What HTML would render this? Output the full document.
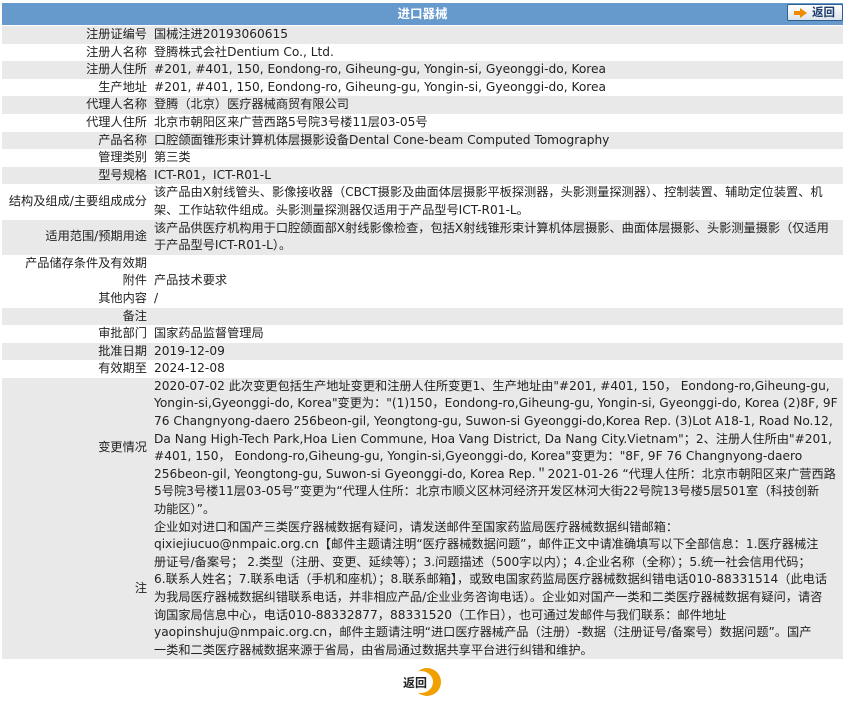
<!DOCTYPE html>
<html><head><meta charset="utf-8"><style>
body{margin:0;background:#fff;font-family:"DejaVu Sans","Noto Sans CJK SC",sans-serif;font-size:12.2px;color:#222;width:850px;height:701px;overflow:hidden;position:relative}
.hdr{position:absolute;left:2px;top:3px;width:841px;height:22px;background:#6699cc;color:#fff;font-weight:bold;text-align:center;line-height:22px;font-size:12.5px;font-family:"Liberation Sans","Noto Sans CJK SC",sans-serif}
.rb{position:absolute;width:54px;height:15px;border:1px solid #2e5e90;border-radius:2px;background:linear-gradient(#fff,#dde4ec);color:#1b3b6a;font-size:11.5px;line-height:15px;font-weight:bold}
.rb i{position:absolute;left:12px;top:3px;width:0;height:0;border-left:7px solid #f08a00;border-top:5px solid transparent;border-bottom:5px solid transparent}
.rb i:before{content:"";position:absolute;left:-13px;top:-2px;width:6px;height:4px;background:#f08a00}
.rb span{position:absolute;left:24px;top:0}
.tb{position:absolute;left:2px;top:26px;width:841px}
.r{display:flex;line-height:17.6px}
.g{background:#e9e9e9}
.l{width:145px;text-align:right;padding-right:7px;display:flex;align-items:center;justify-content:flex-end;white-space:nowrap}
.v{flex:1;white-space:nowrap;overflow:hidden}
.bb{position:absolute;left:403px;top:668px;width:44px;height:28px}
.bb .c{position:absolute;left:10px;top:0;width:28px;height:28px;border-radius:50%;background:#f0a000}
.bb .w{position:absolute;left:6px;top:3px;width:24px;height:22px;border-radius:50%;background:#fff}
.bb span{position:absolute;left:0;top:6px;font-weight:bold;font-size:12px;color:#222}
</style></head><body>
<div class="hdr">进口器械</div>
<div class="rb" style="left:787px;top:4px"><i></i><span>返回</span></div>
<div class="tb">
<div class="r g"><div class="l">注册证编号</div><div class="v">国械注进20193060615</div></div>
<div class="r"><div class="l">注册人名称</div><div class="v">登腾株式会社Dentium Co., Ltd.</div></div>
<div class="r g"><div class="l">注册人住所</div><div class="v">#201, #401, 150, Eondong-ro, Giheung-gu, Yongin-si, Gyeonggi-do, Korea</div></div>
<div class="r"><div class="l">生产地址</div><div class="v">#201, #401, 150, Eondong-ro, Giheung-gu, Yongin-si, Gyeonggi-do, Korea</div></div>
<div class="r g"><div class="l">代理人名称</div><div class="v">登腾（北京）医疗器械商贸有限公司</div></div>
<div class="r"><div class="l">代理人住所</div><div class="v">北京市朝阳区来广营西路5号院3号楼11层03-05号</div></div>
<div class="r g"><div class="l">产品名称</div><div class="v">口腔颌面锥形束计算机体层摄影设备Dental Cone-beam Computed Tomography</div></div>
<div class="r"><div class="l">管理类别</div><div class="v">第三类</div></div>
<div class="r g"><div class="l">型号规格</div><div class="v">ICT-R01，ICT-R01-L</div></div>
<div class="r"><div class="l">结构及组成/主要组成成分</div><div class="v">该产品由X射线管头、影像接收器（CBCT摄影及曲面体层摄影平板探测器，头影测量探测器）、控制装置、辅助定位装置、机<br>架、工作站软件组成。头影测量探测器仅适用于产品型号ICT-R01-L。</div></div>
<div class="r g"><div class="l">适用范围/预期用途</div><div class="v">该产品供医疗机构用于口腔颌面部X射线影像检查，包括X射线锥形束计算机体层摄影、曲面体层摄影、头影测量摄影（仅适用<br>于产品型号ICT-R01-L）。</div></div>
<div class="r"><div class="l">产品储存条件及有效期</div><div class="v">&nbsp;</div></div>
<div class="r"><div class="l">附件</div><div class="v">产品技术要求</div></div>
<div class="r"><div class="l">其他内容</div><div class="v">/</div></div>
<div class="r g"><div class="l">备注</div><div class="v">&nbsp;</div></div>
<div class="r"><div class="l">审批部门</div><div class="v">国家药品监督管理局</div></div>
<div class="r g"><div class="l">批准日期</div><div class="v">2019-12-09</div></div>
<div class="r"><div class="l">有效期至</div><div class="v">2024-12-08</div></div>
<div class="r g"><div class="l">变更情况</div><div class="v">2020-07-02 此次变更包括生产地址变更和注册人住所变更1、生产地址由"#201, #401, 150， Eondong-ro,Giheung-gu,<br>Yongin-si,Gyeonggi-do, Korea"变更为："(1)150，Eondong-ro,Giheung-gu, Yongin-si, Gyeonggi-do, Korea (2)8F, 9F<br>76 Changnyong-daero 256beon-gil, Yeongtong-gu, Suwon-si Gyeonggi-do,Korea Rep. (3)Lot A18-1, Road No.12,<br>Da Nang High-Tech Park,Hoa Lien Commune, Hoa Vang District, Da Nang City.Vietnam"；2、注册人住所由"#201,<br>#401, 150， Eondong-ro,Giheung-gu, Yongin-si,Gyeonggi-do, Korea"变更为："8F, 9F 76 Changnyong-daero<br>256beon-gil, Yeongtong-gu, Suwon-si Gyeonggi-do, Korea Rep.＂2021-01-26 “代理人住所：北京市朝阳区来广营西路<br>5号院3号楼11层03-05号”变更为“代理人住所：北京市顺义区林河经济开发区林河大街22号院13号楼5层501室（科技创新<br>功能区）”。</div></div>
<div class="r g"><div class="l">注</div><div class="v">企业如对进口和国产三类医疗器械数据有疑问，请发送邮件至国家药监局医疗器械数据纠错邮箱：<br>qixiejiucuo@nmpaic.org.cn【邮件主题请注明“医疗器械数据问题”，邮件正文中请准确填写以下全部信息：1.医疗器械注<br>册证号/备案号； 2.类型（注册、变更、延续等）；3.问题描述（500字以内）；4.企业名称（全称）；5.统一社会信用代码；<br>6.联系人姓名；7.联系电话（手机和座机）；8.联系邮箱】，或致电国家药监局医疗器械数据纠错电话010-88331514（此电话<br>为我局医疗器械数据纠错联系电话，并非相应产品/企业业务咨询电话）。企业如对国产一类和二类医疗器械数据有疑问，请咨<br>询国家局信息中心，电话010-88332877，88331520（工作日），也可通过发邮件与我们联系：邮件地址<br>yaopinshuju@nmpaic.org.cn，邮件主题请注明“进口医疗器械产品（注册）-数据（注册证号/备案号）数据问题”。国产<br>一类和二类医疗器械数据来源于省局，由省局通过数据共享平台进行纠错和维护。</div></div>
</div>
<div class="bb"><div class="c"></div><div class="w"></div><span>返回</span></div>
</body></html>
